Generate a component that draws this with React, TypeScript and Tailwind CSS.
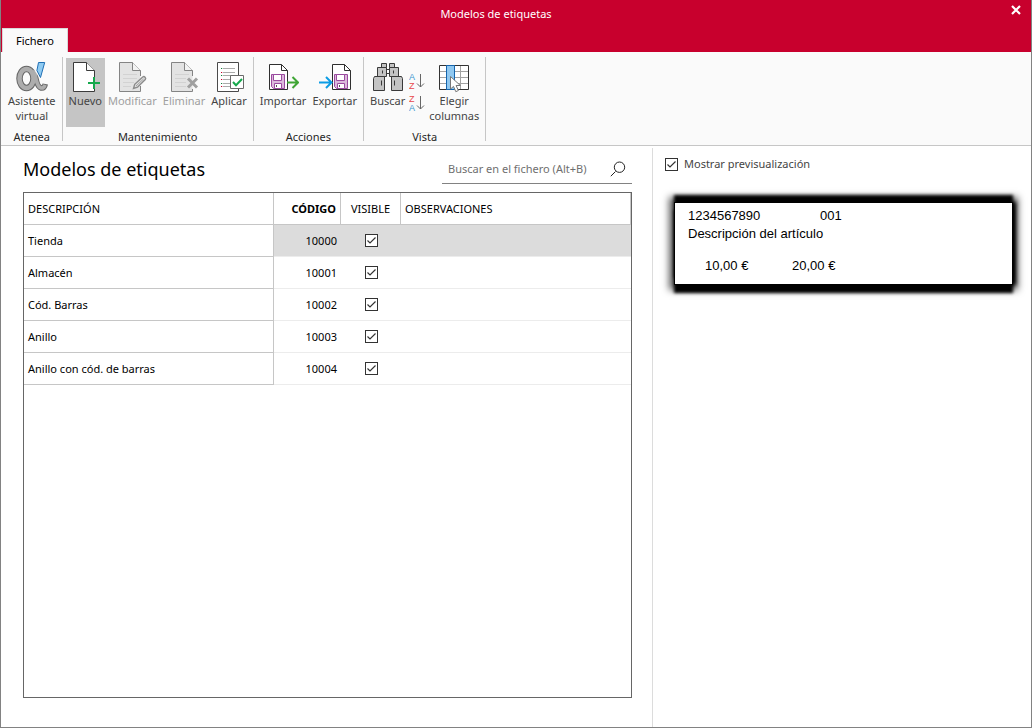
import { useState, type ReactNode } from "react";

const rows = [
  { description: "Tienda", code: 10000 },
  { description: "Almacén", code: 10001 },
  { description: "Cód. Barras", code: 10002 },
  { description: "Anillo", code: 10003 },
  { description: "Anillo con cód. de barras", code: 10004 },
];

const Icon = ({ children }: { children: ReactNode }) => (
  <svg width="32" height="32" viewBox="0 0 32 32" fill="none" aria-hidden="true">
    {children}
  </svg>
);

// Atenea logo
const AlphaIcon = () => (
  <Icon>
    <ellipse cx="10.500" cy="17.500" rx="7" ry="9.500" stroke="#666" strokeWidth="6.500" />
    <path d="M18.500 9c1 6 2 17 6.500 18 2.500.4 3.800-1.500 4.300-4" stroke="#666" strokeWidth="5.500" />
    <ellipse cx="10.500" cy="17.500" rx="7" ry="9.500" stroke="#adadad" strokeWidth="4.500" />
    <path d="M18.500 9c1 6 2 17 6.500 18 2.300.4 3.500-1.500 4.100-3.200" stroke="#adadad" strokeWidth="3.500" />
    <path d="M22 1.500h6.700l-4 15-4.300-7z" fill="#8fcbf2" stroke="#fafafa" strokeWidth="3" />
    <path d="M22.500 1.500h6.200l-4.200 15-3.600-7z" fill="#8fcbf2" stroke="#1f6fb5" />
  </Icon>
);

const NewIcon = () => (
  <Icon>
    <path d="M4.5 1.5h13l8 8v21h-21z" fill="#fff" />
    <path d="M25.5 17V9.5l-8-8h-13v29h21V27" stroke="#3b3b3b" />
    <path d="M17.5 1.5v8h8" fill="#fafafa" stroke="#3b3b3b" />
    <path d="M25 16v12M19 22h12" stroke="#15a84c" strokeWidth="2" />
  </Icon>
);

const EditIcon = () => (
  <Icon>
    <path d="M3.5 1.5h13l8 8v21h-21z" fill="#e3e3e3" />
    <path d="M24.5 15V9.5l-8-8h-13v29h21V25" stroke="#848484" />
    <path d="M16.5 1.5v8h8" fill="#f3f3f3" stroke="#848484" />
    <path d="M7 13.5h14M7 17.5h14M7 21.5h11M7 25.5h8" stroke="#d2d2d2" />
    <path
      d="M17.5 27.5l1.200-4.200 8-7.300c1.600-1.200 3.800.8 2.600 2.500l-7.800 7.700z"
      fill="#dedede"
      stroke="#8c8c8c"
      strokeWidth="1.400"
    />
    <path d="M20 25l7.500-7" stroke="#a3a3a3" />
  </Icon>
);

const DeleteIcon = () => (
  <Icon>
    <path d="M3.5 1.5h13l8 8v21h-21z" fill="#e3e3e3" />
    <path d="M24.5 15V9.5l-8-8h-13v29h21V28" stroke="#848484" />
    <path d="M16.5 1.5v8h8" fill="#f3f3f3" stroke="#848484" />
    <path d="M7 13.5h14M7 17.5h11M7 21.5h11M7 25.5h11" stroke="#d2d2d2" />
    <path d="M20 17.5l9 9M29 17.5l-9 9" stroke="#a0a0a0" strokeWidth="3" />
  </Icon>
);

const ApplyIcon = () => (
  <Icon>
    <path d="M4.5 1.5h21v29h-21z" fill="#fff" stroke="#4a4a4a" />
    <path
      d="M10 7.5h12M10 11.5h12M10 14.5h12M10 18.5h8M10 22.5h8M10 25.5h8"
      stroke="#ababab"
    />
    <path d="M8 7.5h1.200M8 14.5h1.200M8 22.5h1.200" stroke="#15803d" />
    <path d="M8 11.5h1.200M8 18.5h1.200M8 25.5h1.200" stroke="#c8002d" />
    <path d="M17.5 14.5h13v13h-13z" fill="#fff" stroke="#6a6a6a" />
    <path d="M20 21l3 3.200 6-6.200" stroke="#15a84c" strokeWidth="2" />
  </Icon>
);

// Shared by import and export
const DiskPage = () => (
  <>
    <path d="M.5.5h12l6 6v19H.5z" fill="#fff" stroke="#2f2f2f" />
    <path d="M12.5.5v6h6" stroke="#2f2f2f" />
    <path d="M2.5 10.5h13v14h-11l-2-2z" fill="#dcb9dc" stroke="#9a4a9f" />
    <path d="M4.5 10.5h8v6h-8z" fill="#fff" stroke="#9a4a9f" />
    <path d="M5.5 24.5v-5h7v5z" fill="#fff" stroke="#9a4a9f" />
    <path d="M7.5 21v2" stroke="#555" />
  </>
);

const ImportIcon = () => (
  <Icon>
    <g transform="translate(2 3)">
      <DiskPage />
    </g>
    <path d="M20 21.5h11M25.5 16l5.500 5.500-5.500 5.500" stroke="#3fa535" strokeWidth="2" />
  </Icon>
);

const ExportIcon = () => (
  <Icon>
    <g transform="translate(13 3)">
      <DiskPage />
    </g>
    <path d="M0 21.5h12M7 16l5.500 5.500L7 27" stroke="#0c9ce4" strokeWidth="2" />
  </Icon>
);

const BinocularsIcon = () => (
  <Icon>
    <g fill="#c4c4c4" stroke="#3a3a3a">
      <path d="M13 8.5h6v4h-6z" fill="#fff" />
      <path d="M9.5 2.5h5v4h-5zM17.5 2.5h5v4h-5z" />
      <path d="M5.5 6.5h9v9h-9zM17.5 6.5h9v9h-9z" />
      <path d="M2.5 15.5h10v14h-11v-12zM19.5 15.5h10l1 2v12h-11z" />
      <path d="M10.5 9.5v3M21.5 9.5v3M9.5 19.5v5M22.5 19.5v5" />
    </g>
  </Icon>
);

const ColumnsIcon = () => (
  <Icon>
    <path d="M1.5 4.5h29v24h-29z" fill="#fff" />
    <path d="M1.5 10.5h29M1.5 16.5h29M1.5 22.5h29M22.5 4.5v24" stroke="#a3a3a3" />
    <path d="M1.5 4.5h29v24h-29z" stroke="#333" />
    <path d="M8.5 4.5h8v24h-8z" fill="#90c8f0" stroke="#1565ae" />
    <path
      d="M12.5 15.5v12.500l3-2.600 2.300 5.300 2.600-1.200-2.300-5h4.300z"
      fill="#fff"
      stroke="#777"
    />
  </Icon>
);

const SortIcon = ({ top, bottom }: { top: string; bottom: string }) => (
  <svg width="16" height="20" viewBox="0 0 16 20" aria-hidden="true">
    <g fontFamily="Liberation Sans, sans-serif" fontSize="9">
      <text x="0" y="9" fill={top === "A" ? "#3a96d0" : "#e8474c"}>
        {top}
      </text>
      <text x="0" y="18" fill={bottom === "A" ? "#3a96d0" : "#e8474c"}>
        {bottom}
      </text>
    </g>
    <path d="M11.5 3v13M8 12.5l3.500 3.500 3.500-3.500" fill="none" stroke="#666" />
  </svg>
);

type RibbonButtonProps = {
  icon: ReactNode;
  label: ReactNode;
  active?: boolean;
  disabled?: boolean;
};

const RibbonButton = ({ icon, label, active, disabled }: RibbonButtonProps) => (
  <button
    type="button"
    disabled={disabled}
    className={`flex h-[69px] flex-col items-center px-[3px] pt-[3px] text-[11px] leading-[15px] ${
      active ? "bg-[#c5c5c5]" : ""
    } ${disabled ? "text-[#a0a0a0]" : "text-[#444]"}`}
  >
    {icon}
    <span>{label}</span>
  </button>
);

const RibbonGroup = ({ title, children }: { title: string; children: ReactNode }) => (
  <>
    <section className="flex flex-col px-[3px] pt-[5px]">
      <div className="flex justify-center">{children}</div>
      <h2 className="mt-[3px] text-center text-[11px] leading-[14px] text-[#262626]">{title}</h2>
    </section>
    <div className="my-1 w-px bg-[#c6c6c6]" />
  </>
);

type CheckBoxProps = {
  id?: string;
  label?: string;
  checked: boolean;
  onChange: () => void;
};

const CheckBox = ({ id, label, checked, onChange }: CheckBoxProps) => (
  <span className="relative block size-[13px]">
    <input
      id={id}
      type="checkbox"
      aria-label={label}
      checked={checked}
      onChange={onChange}
      className="block size-[13px] appearance-none border border-[#333] bg-white"
    />
    {checked && (
      <svg
        className="pointer-events-none absolute inset-0"
        width="13"
        height="13"
        viewBox="0 0 13 13"
        aria-hidden="true"
      >
        <path d="M2.5 6.5l2.500 2.500 5.500-5.500" fill="none" stroke="#333" strokeWidth="1.200" />
      </svg>
    )}
  </span>
);

const ModelTable = () => {
  const [hidden, setHidden] = useState<number[]>([]);

  const toggle = (code: number) =>
    setHidden((old) => (old.includes(code) ? old.filter((c) => c !== code) : [...old, code]));

  const head = "h-8 border-r border-b border-[#c6c6c6] px-1 pt-0.5 pb-0";

  return (
    <div className="flex-1 border border-[#666]">
      <table className="w-full table-fixed border-separate border-spacing-0 text-[11px] text-black">
        <colgroup>
          <col className="w-[250px]" />
          <col className="w-[67px]" />
          <col className="w-[60px]" />
          <col />
        </colgroup>
        <thead>
          <tr>
            <th className={`${head} text-left font-normal`}>DESCRIPCIÓN</th>
            <th className={`${head} text-right font-bold`}>CÓDIGO</th>
            <th className={`${head} text-center font-normal`}>VISIBLE</th>
            <th className={`${head} text-left font-normal`}>OBSERVACIONES</th>
          </tr>
        </thead>
        <tbody>
          {rows.map((row, index) => {
            const cell = `h-8 border-b border-[#ececec] px-1 pb-0 ${index === 0 ? "bg-[#dcdcdc]" : ""}`;
            return (
              <tr key={row.code}>
                <td className="h-8 border-r border-b border-[#c6c6c6] px-1 pt-0.5 pb-0">
                  {row.description}
                </td>
                <td className={`${cell} pt-0.5 text-right`}>{row.code}</td>
                <td className={`${cell} pt-0`}>
                  <div className="flex justify-center">
                    <CheckBox
                      label={`Visible ${row.description}`}
                      checked={!hidden.includes(row.code)}
                      onChange={() => toggle(row.code)}
                    />
                  </div>
                </td>
                <td className={cell}></td>
              </tr>
            );
          })}
        </tbody>
      </table>
    </div>
  );
};

const LabelPreview = () => (
  <div className="mt-[30px] mr-[18px] ml-[9px] border border-black bg-white px-[13px] pt-1 pb-[9px] font-['Liberation_Sans',sans-serif] text-[13px] leading-[18px] text-black shadow-[0_-7px_3px_0_#000,0_8px_3px_0_#000,3px_0_4px_0_#000,0_0_7px_5px_#000000a0]">
    <div className="flex">
      <span className="w-[132px]">1234567890</span>
      <span>001</span>
    </div>
    <div>Descripción del artículo</div>
    <div className="mt-3.5 flex pl-[17px]">
      <span className="w-[87px]">10,00 €</span>
      <span>20,00 €</span>
    </div>
  </div>
);

const App = () => {
  const [preview, setPreview] = useState(true);

  return (
    <div className="flex min-h-screen flex-col border border-t-0 border-[#828282] bg-white font-['Noto_Sans',sans-serif]">
      <header className="bg-[#c8002d]">
        <div className="flex h-7 items-start">
          <h1 className="flex-1 text-center text-[11px] leading-7 text-white">
            Modelos de etiquetas
          </h1>
          <button type="button" aria-label="Cerrar" className="flex w-10 justify-end pt-[5px] pr-[10px]">
            <svg width="10" height="10" viewBox="0 0 10 10" aria-hidden="true">
              <path d="M1 1l8 8M9 1L1 9" stroke="#fff" strokeWidth="2.200" />
            </svg>
          </button>
        </div>
        <div className="flex">
          <button
            type="button"
            className="ml-px h-6 border-t border-r border-l border-[#d9d9d9] bg-[#fafafa] px-[13px] pt-0.5 text-[11px] text-black"
          >
            Fichero
          </button>
        </div>
      </header>

      <nav className="flex h-[94px] border-b border-[#c6c6c6] bg-[#fafafa] pt-px pl-px">
        <RibbonGroup title="Atenea">
          <RibbonButton
            icon={<AlphaIcon />}
            label={
              <>
                Asistente
                <br />
                virtual
              </>
            }
          />
        </RibbonGroup>
        <RibbonGroup title="Mantenimiento">
          <RibbonButton icon={<NewIcon />} label="Nuevo" active />
          <RibbonButton icon={<EditIcon />} label="Modificar" disabled />
          <RibbonButton icon={<DeleteIcon />} label="Eliminar" disabled />
          <RibbonButton icon={<ApplyIcon />} label="Aplicar" />
        </RibbonGroup>
        <RibbonGroup title="Acciones">
          <RibbonButton icon={<ImportIcon />} label="Importar" />
          <RibbonButton icon={<ExportIcon />} label="Exportar" />
        </RibbonGroup>
        <RibbonGroup title="Vista">
          <RibbonButton icon={<BinocularsIcon />} label="Buscar" />
          <div className="flex flex-col gap-0.5 px-px pt-[13px]">
            <button type="button" aria-label="Orden ascendente">
              <SortIcon top="A" bottom="Z" />
            </button>
            <button type="button" aria-label="Orden descendente">
              <SortIcon top="Z" bottom="A" />
            </button>
          </div>
          <RibbonButton
            icon={<ColumnsIcon />}
            label={
              <>
                Elegir
                <br />
                columnas
              </>
            }
          />
        </RibbonGroup>
      </nav>

      <div className="flex flex-1">
        <main className="flex flex-1 flex-col pr-5 pb-[29px] pl-[22px]">
          <div className="mb-2 flex items-end justify-between">
            <h2 className="pb-px text-[18px] leading-7 text-black">Modelos de etiquetas</h2>
            <div className="mt-2 flex h-[30px] w-[190px] items-center border-b border-[#828282] pr-[6px] pl-1.5">
              <input
                type="text"
                aria-label="Buscar en el fichero"
                placeholder="Buscar en el fichero (Alt+B)"
                className="w-full min-w-0 flex-1 pt-0.5 text-[11px] text-black outline-none placeholder:text-[#6f6f6f]"
              />
              <svg width="16" height="16" viewBox="0 0 16 16" fill="none" aria-hidden="true">
                <path d="M5.5 10.5L.8 15.200" stroke="#222" />
                <circle cx="9.500" cy="6.200" r="5.200" stroke="#222" />
              </svg>
            </div>
          </div>
          <ModelTable />
        </main>

        <aside className="mt-0.5 w-[379px] border-l border-[#dcdcdc] pl-3">
          <div className="flex items-center gap-1.5 pt-2">
            <CheckBox id="preview" checked={preview} onChange={() => setPreview(!preview)} />
            <label htmlFor="preview" className="text-[11px] leading-4 text-[#444]">
              Mostrar previsualización
            </label>
          </div>
          {preview && <LabelPreview />}
        </aside>
      </div>
    </div>
  );
};

export default App;
